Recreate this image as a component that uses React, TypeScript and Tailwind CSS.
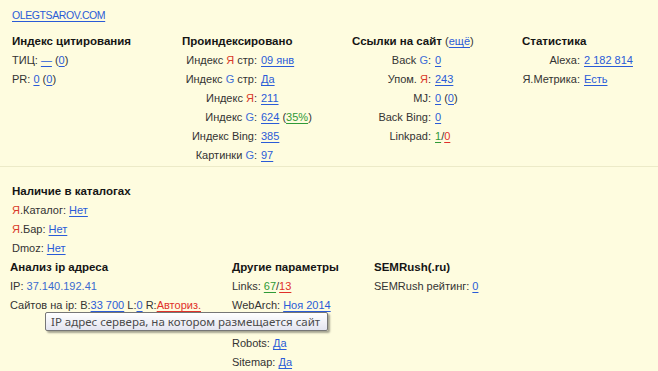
import type { ReactNode } from 'react';

const font = { fontFamily: '"Liberation Sans", Arial, sans-serif' };

function A({ children, tone = 'blue' }: { children: ReactNode; tone?: 'blue' | 'green' | 'red' }) {
  const cls =
    tone === 'green' ? 'text-[#2f9a37]' :
      tone === 'red' ? 'text-[#e0302a]' :
        'text-[#2a5bd7]';
  return <a href="#" className={`${cls} underline underline-offset-[2px]`}>{children}</a>;
}

const Ya = () => <span className="text-[#d93a2a]">Я</span>;
const G = () => <span className="text-[#3d6dd8]">G</span>;

function H({ children }: { children: ReactNode }) {
  return <div className="font-bold text-[11.5px] text-[#151515] leading-[19px] whitespace-nowrap">{children}</div>;
}

// row with right-aligned label and value
function KV({ label, w, children }: { label: ReactNode; w: string; children: ReactNode }) {
  return (
    <div className="flex leading-[19px] whitespace-nowrap">
      <span className={`${w} text-right shrink-0`}>{label}</span>
      <span className="ml-[4px]">{children}</span>
    </div>
  );
}

function Row({ children }: { children: ReactNode }) {
  return <div className="leading-[19px] whitespace-nowrap">{children}</div>;
}

export default function App() {
  return (
    <div className="w-[658px] h-[371px] overflow-hidden bg-[#fefcdf] text-[#333] text-[11px] relative" style={font}>
      <div className="pt-[6px] pl-[12px]">
        <div className="leading-[19px] text-[10.5px] tracking-[-0.4px]"><A>OLEGTSAROV.COM</A></div>
      </div>

      <div className="mt-[7px] pl-[12px] grid grid-cols-[170px_170px_170px_146px]">
        <div>
          <H>Индекс цитирования</H>
          <Row>ТИЦ: <A>—</A> (<A>0</A>)</Row>
          <Row>PR: <A>0</A> (<A>0</A>)</Row>
        </div>
        <div>
          <H>Проиндексировано</H>
          <KV w="w-[75px]" label={<>Индекс <Ya /> стр:</>}><A>09 янв</A></KV>
          <KV w="w-[75px]" label={<>Индекс <G /> стр:</>}><A>Да</A></KV>
          <KV w="w-[75px]" label={<>Индекс <Ya />:</>}><A>211</A></KV>
          <KV w="w-[75px]" label={<>Индекс <G />:</>}><A>624</A> (<A tone="green">35%</A>)</KV>
          <KV w="w-[75px]" label="Индекс Bing:"><A>385</A></KV>
          <KV w="w-[75px]" label={<>Картинки <G />:</>}><A>97</A></KV>
        </div>
        <div>
          <H>Ссылки на сайт <span className="font-normal text-[11px] text-[#333]">(<A>ещё</A>)</span></H>
          <KV w="w-[79px]" label={<>Back <G />:</>}><A>0</A></KV>
          <KV w="w-[79px]" label={<>Упом. <Ya />:</>}><A>243</A></KV>
          <KV w="w-[79px]" label="MJ:"><A>0</A> (<A>0</A>)</KV>
          <KV w="w-[79px]" label="Back Bing:"><A>0</A></KV>
          <KV w="w-[79px]" label="Linkpad:"><A tone="green">1</A>/<A tone="red">0</A></KV>
        </div>
        <div>
          <H>Статистика</H>
          <KV w="w-[58px]" label="Alexa:"><A>2 182 814</A></KV>
          <KV w="w-[58px]" label="Я.Метрика:"><A>Есть</A></KV>
        </div>
      </div>

      <div className="mt-[1px] h-px bg-[#eceac8]" />

      <div className="mt-[15px] pl-[12px]">
        <H>Наличие в каталогах</H>
        <Row><Ya />.Каталог: <A>Нет</A></Row>
        <Row><Ya />.Бар: <A>Нет</A></Row>
        <Row>Dmoz: <A>Нет</A></Row>
      </div>

      <div className="pl-[10px] grid grid-cols-[222px_142px_1fr]">
        <div>
          <H>Анализ ip адреса</H>
          <Row>IP: <span className="text-[#3a6ad0]">37.140.192.41</span></Row>
          <Row>Сайтов на ip: B:<A>33 700</A> L:<A>0</A> R:<A tone="red">Авториз.</A></Row>
        </div>
        <div>
          <H>Другие параметры</H>
          <Row>Links: <A tone="green">67</A>/<A tone="red">13</A></Row>
          <Row>WebArch: <A>Ноя 2014</A></Row>
          <div className="h-[19px]" />
          <Row>Robots: <A>Да</A></Row>
          <Row>Sitemap: <A>Да</A></Row>
        </div>
        <div>
          <H>SEMRush(.ru)</H>
          <Row>SEMRush рейтинг: <A>0</A></Row>
        </div>
      </div>

      {/* tooltip */}
      <div
        className="absolute left-[45px] top-[312px] h-[19px] pl-[5px] pr-[7px] flex items-center border border-[#767676] rounded-[2px] bg-gradient-to-b from-[#ffffff] to-[#e4e5f0] text-[#4a4a4a] text-[11.5px] whitespace-nowrap shadow-[2px_2px_2px_rgba(0,0,0,0.35)]"
        style={{ fontFamily: '"Noto Sans", "Open Sans", sans-serif' }}
      >
        IP адрес сервера, на котором размещается сайт
      </div>
    </div>
  );
}
